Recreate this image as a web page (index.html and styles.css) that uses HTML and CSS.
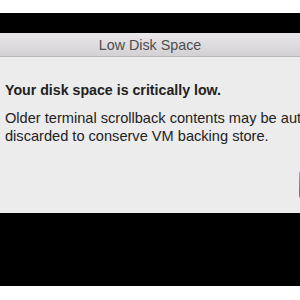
FILE: index.html
```html
<!DOCTYPE html>
<html lang="en">
<head>
    <meta charset="utf-8"/>
    <title>Low Disk Space</title>
    <link rel="stylesheet" href="styles.css">
</head>
<body>
    <div class="top-gap"></div>
    <div class="backdrop">
        <div class="window">
            <div class="titlebar">Low Disk Space</div>
            <div class="content">
                <p class="headline">Your disk space is critically low.</p>
                <p class="message">Older terminal scrollback contents may be automatically discarded to conserve VM backing store.</p>
                <div class="actions">
                    <button type="button" class="btn-ok">OK</button>
                </div>
            </div>
        </div>
    </div>
</body>
</html>
```

FILE: styles.css
```css
html, body {
    margin: 0;
    padding: 0;
    background: #fff;
    font-family: "Liberation Sans", Arial, sans-serif;
}
.top-gap {
    height: 13px;
}
.backdrop {
    background: #000;
    padding: 20px 0 73px 0;
}
.window {
    background: #ececec;
    overflow: hidden;
}
.titlebar {
    height: 23px;
    line-height: 25px;
    text-align: center;
    font-size: 14.3px;
    color: #4d4d4d;
    background: linear-gradient(#e9e7e9, #d3d1d3);
    border-bottom: 1px solid #b9b7b9;
}
.content {
    padding: 25px 0 0 5px;
    height: 131px;
    box-sizing: content-box;
}
.headline {
    margin: 0;
    font-size: 14.2px;
    line-height: 17px;
    font-weight: bold;
    color: #222;
    white-space: nowrap;
}
.message {
    margin: 10px 0 0 0;
    font-size: 14.6px;
    line-height: 18px;
    color: #222;
    width: 390px;
}
.actions {
    display: flex;
    justify-content: flex-end;
    margin-top: 25px;
    width: 369px;
}
.btn-ok {
    width: 75px;
    height: 29px;
    border: none;
    border-radius: 4px;
    background: linear-gradient(#6cb3fa, #087eff);
    color: #fff;
    font-family: "Liberation Sans", Arial, sans-serif;
    font-size: 13px;
}
```
